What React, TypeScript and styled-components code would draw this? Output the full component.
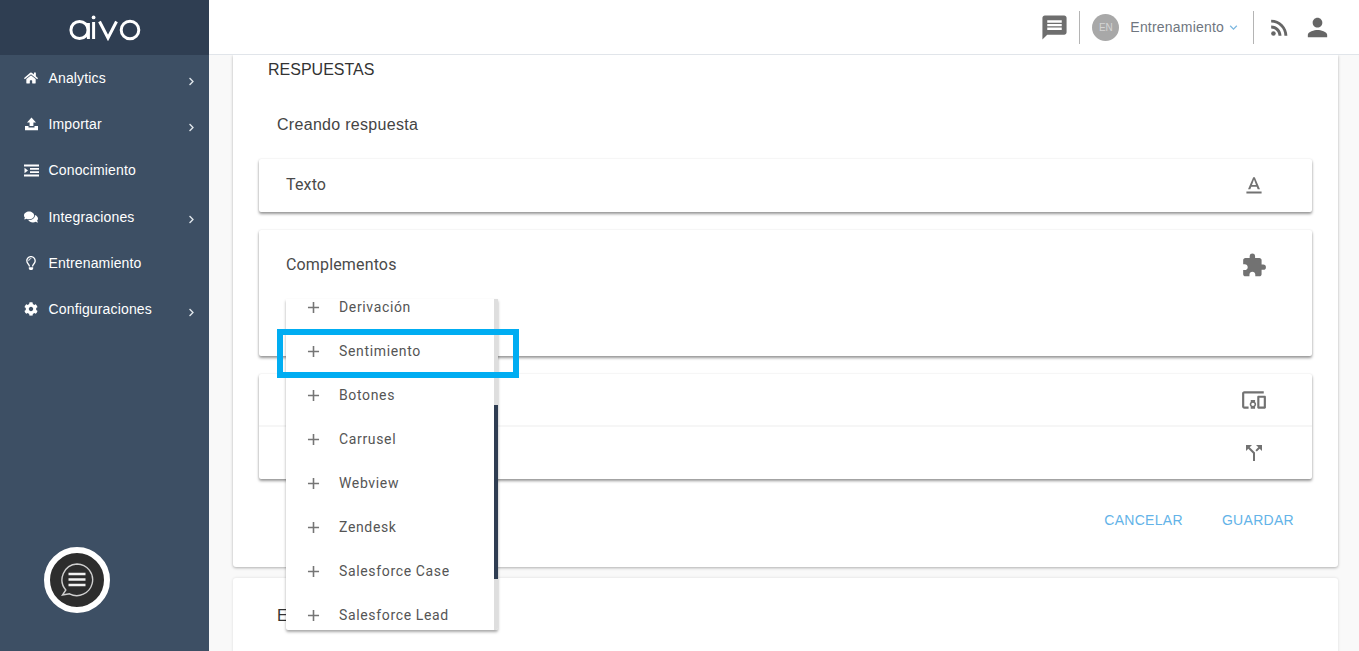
import React from "react";
import styled, { createGlobalStyle } from "styled-components";
import { FaHome, FaComments, FaRegLightbulb, FaCog, FaChevronRight } from "react-icons/fa";
import {
  MdMessage,
  MdRssFeed,
  MdPerson,
  MdKeyboardArrowDown,
  MdTextFormat,
  MdExtension,
  MdCallSplit,
  MdAdd,
  MdOutlineDevicesOther,
} from "react-icons/md";

const GlobalStyle = createGlobalStyle`
  html, body {
    margin: 0;
    height: 100%;
    overflow: hidden;
    background: #f9f9f9;
  }
  #root {
    height: 100%;
  }
`;

const Page = styled.div`
  display: flex;
  height: 651px;
  width: 1359px;
  overflow: hidden;
  position: relative;
  font-family: "Liberation Sans", Arial, sans-serif;
`;

const Sidebar = styled.aside`
  width: 209px;
  flex: none;
  display: flex;
  flex-direction: column;
  background: #3d4f64;
`;

const LogoBar = styled.div`
  height: 55px;
  display: flex;
  align-items: center;
  justify-content: center;
  background: #2f3e52;
`;

const NavRow = styled.div`
  height: 46.2px;
  display: flex;
  align-items: center;
  padding-left: 24px;
  color: #fff;
  font-size: 14px;
  letter-spacing: 0.15px;
  position: relative;
`;

const NavIcon = styled.span`
  width: 24.5px;
  display: flex;
  align-items: center;
  font-size: 14px;
`;

const NavArrow = styled.span`
  margin-left: auto;
  margin-right: 13px;
  margin-top: 6px;
  font-size: 9px;
  display: flex;
  color: #dfe5ea;
`;

const ChatBubble = styled.div`
  margin-top: auto;
  margin-left: 44px;
  margin-bottom: 38px;
  width: 66px;
  height: 66px;
  box-sizing: border-box;
  border: 6px solid #fff;
  border-radius: 50%;
  background: #2d2d2d;
  display: flex;
  align-items: center;
  justify-content: center;
`;

const Main = styled.div`
  flex: 1;
  display: flex;
  flex-direction: column;
  min-width: 0;
`;

const TopBar = styled.header`
  height: 54px;
  flex: none;
  background: #fff;
  border-bottom: 1px solid #e1e5ea;
  display: flex;
  align-items: center;
  justify-content: flex-end;
  color: #666;
  padding-right: 27px;
`;

const TopIcon = styled.span<{ $size: number; $ml: number }>`
  display: flex;
  font-size: ${(p) => p.$size}px;
  margin-left: ${(p) => p.$ml}px;
`;

const Divider = styled.span<{ $ml: number }>`
  width: 1px;
  height: 33px;
  background: #b4b4b4;
  margin-left: ${(p) => p.$ml}px;
`;

const Avatar = styled.span`
  width: 27px;
  height: 27px;
  border-radius: 50%;
  background: #a8a8a8;
  color: #d4d4d4;
  font-size: 10px;
  display: flex;
  align-items: center;
  justify-content: center;
  margin-left: 12px;
`;

const UserName = styled.span`
  font-size: 14px;
  letter-spacing: 0.2px;
  color: #6f7680;
  margin-left: 11px;
`;

const Content = styled.main`
  flex: 1;
  overflow: hidden;
  padding: 0 21px 0 24px;
  display: flex;
  flex-direction: column;
  gap: 11px;
`;

const Card = styled.section`
  flex: none;
  background: #fff;
  border-radius: 0 0 3px 3px;
  box-shadow: 0 1px 3px rgba(0, 0, 0, 0.3);
  height: 512px;
  padding: 0 26px;
  box-sizing: border-box;
  display: flex;
  flex-direction: column;
`;

const SecondCard = styled.section`
  flex: none;
  background: #fff;
  border-radius: 3px 3px 0 0;
  box-shadow: 0 0 3px rgba(0, 0, 0, 0.12);
  height: 120px;
  padding: 29px 0 0 44px;
  font-size: 16px;
  color: #333;
`;

const SectionTitle = styled.h2`
  margin: 6px 0 0 9px;
  height: 18px;
  line-height: 18px;
  font-size: 16px;
  font-weight: 400;
  color: #333;
`;

const SubTitle = styled.h3`
  margin: 37px 0 0 18px;
  height: 18px;
  line-height: 18px;
  font-size: 16px;
  letter-spacing: 0.3px;
  font-weight: 400;
  color: #444;
`;

const Panel = styled.div<{ $height: number; $mt: number }>`
  height: ${(p) => p.$height}px;
  margin-top: ${(p) => p.$mt}px;
  flex: none;
  background: #fff;
  border-radius: 2px;
  box-shadow: 0 2px 3px rgba(0, 0, 0, 0.4), 0 0 2px rgba(0, 0, 0, 0.1);
  display: flex;
  flex-direction: column;
`;

const PanelRow = styled.div<{ $height: number; $line?: boolean }>`
  height: ${(p) => p.$height}px;
  flex: none;
  box-sizing: border-box;
  display: flex;
  align-items: center;
  padding: 0 45px 0 27px;
  font-family: Roboto, sans-serif;
  font-size: 16px;
  letter-spacing: 0.15px;
  color: #4a4a4a;
  border-bottom: ${(p) => (p.$line ? "2px solid #f6f6f6" : "none")};
`;

const PanelLabel = styled.span`
  position: relative;
  top: -1px;
`;

const PanelIcon = styled.span<{ $size: number }>`
  margin-left: auto;
  width: 26px;
  display: flex;
  justify-content: center;
  font-size: ${(p) => p.$size}px;
  color: #727272;
`;

const Actions = styled.div`
  display: flex;
  justify-content: flex-end;
  gap: 39px;
  margin-top: 33px;
  padding-right: 18px;
  font-size: 14px;
  letter-spacing: 0.3px;
  color: #63b3e8;
`;

const Menu = styled.div`
  position: absolute;
  left: 286px;
  top: 299px;
  width: 212px;
  height: 331px;
  overflow: hidden;
  background: #fff;
  border-radius: 0 0 2px 2px;
  box-shadow: 0 2px 3px rgba(0, 0, 0, 0.35);
`;

const MenuList = styled.div`
  margin-top: -14px;
`;

const MenuItem = styled.div`
  height: 44px;
  display: flex;
  align-items: center;
  padding-left: 18px;
  font-family: Roboto, sans-serif;
  font-size: 14px;
  letter-spacing: 0.65px;
  color: #555;
`;

const PlusIcon = styled.span`
  display: flex;
  width: 35px;
  font-size: 19px;
  color: #757575;
`;

const ScrollTrack = styled.div`
  position: absolute;
  right: 0;
  top: 0;
  bottom: 0;
  width: 4px;
  background: #dedede;
`;

const ScrollThumb = styled.div`
  position: absolute;
  left: 0;
  top: 106px;
  width: 100%;
  height: 174px;
  background: #2f3d52;
`;

const Highlight = styled.div`
  position: absolute;
  left: 277px;
  top: 329px;
  width: 242px;
  height: 49px;
  box-sizing: border-box;
  border: 6px solid #00adf2;
`;

function UploadIcon() {
  return (
    <svg width="15" height="14" viewBox="0 0 15 14" fill="#fff">
      <path d="M7.5 0.5 L12 5.5 H9.4 V9 H5.6 V5.5 H3 Z" />
      <path d="M1 9 H4.5 V10.5 H10.5 V9 H14 V13.2 H1 Z" />
    </svg>
  );
}

function IndentIcon() {
  return (
    <svg width="15" height="13" viewBox="0 0 15 13" fill="#fff">
      <path d="M0 0.5 H15 V2.5 H0 Z M6 4 H15 V5.8 H6 Z M6 7.2 H15 V9 H6 Z M0 10.5 H15 V12.5 H0 Z" />
      <path d="M0.5 3.8 L4 6.5 L0.5 9.2 Z" />
    </svg>
  );
}

function Logo() {
  return (
    <svg width="72" height="26" viewBox="0 0 72 26" fill="none" stroke="#fff" strokeWidth="3">
      <circle cx="10.5" cy="15" r="8.6" />
      <path d="M19.4 8 V24" />
      <path d="M24.6 7 V24" />
      <circle cx="24.6" cy="2.4" r="1.9" fill="#fff" stroke="none" />
      <path d="M30.5 6.5 L39 23 L47.5 6.5" />
      <circle cx="61" cy="15" r="8.8" />
    </svg>
  );
}

function BubbleIcon() {
  return (
    <svg width="36" height="36" viewBox="0 0 36 36" fill="none">
      <path
        d="M18 2 A15.8 15.8 0 1 1 10.5 31.8 L3.5 33 L6.8 28 A15.8 15.8 0 0 1 18 2 Z"
        stroke="#cfcfcf"
        strokeWidth="1.4"
      />
      <path d="M9.5 12 H26.5 M9.5 17.5 H26.5 M9.5 23 H26.5" stroke="#f2f2f2" strokeWidth="2.4" />
    </svg>
  );
}

const navItems = [
  { label: "Analytics", icon: <FaHome />, arrow: true },
  { label: "Importar", icon: <UploadIcon />, arrow: true },
  { label: "Conocimiento", icon: <IndentIcon />, arrow: false },
  { label: "Integraciones", icon: <FaComments />, arrow: true },
  { label: "Entrenamiento", icon: <FaRegLightbulb />, arrow: false },
  { label: "Configuraciones", icon: <FaCog />, arrow: true },
];

const menuItems = [
  "Derivación",
  "Sentimiento",
  "Botones",
  "Carrusel",
  "Webview",
  "Zendesk",
  "Salesforce Case",
  "Salesforce Lead",
];

export default function App() {
  return (
    <Page>
      <GlobalStyle />
      <Sidebar>
        <LogoBar>
          <Logo />
        </LogoBar>
        {navItems.map((item) => (
          <NavRow key={item.label}>
            <NavIcon>{item.icon}</NavIcon>
            {item.label}
            {item.arrow && (
              <NavArrow>
                <FaChevronRight />
              </NavArrow>
            )}
          </NavRow>
        ))}
        <ChatBubble>
          <BubbleIcon />
        </ChatBubble>
      </Sidebar>
      <Main>
        <TopBar>
          <TopIcon $size={29} $ml={0}>
            <MdMessage color="#6e6e6e" />
          </TopIcon>
          <Divider $ml={10} />
          <Avatar>EN</Avatar>
          <UserName>Entrenamiento</UserName>
          <TopIcon $size={15} $ml={2}>
            <MdKeyboardArrowDown color="#7db8e0" />
          </TopIcon>
          <Divider $ml={12} />
          <TopIcon $size={25} $ml={13}>
            <MdRssFeed />
          </TopIcon>
          <TopIcon $size={29} $ml={11}>
            <MdPerson />
          </TopIcon>
        </TopBar>
        <Content>
          <Card>
            <SectionTitle>RESPUESTAS</SectionTitle>
            <SubTitle>Creando respuesta</SubTitle>
            <Panel $height={53} $mt={25}>
              <PanelRow $height={53}>
                <PanelLabel>Texto</PanelLabel>
                <PanelIcon $size={26}>
                  <MdTextFormat />
                </PanelIcon>
              </PanelRow>
            </Panel>
            <Panel $height={126} $mt={18}>
              <PanelRow $height={70}>
                <PanelLabel>Complementos</PanelLabel>
                <PanelIcon $size={29}>
                  <MdExtension />
                </PanelIcon>
              </PanelRow>
            </Panel>
            <Panel $height={105} $mt={18}>
              <PanelRow $height={53} $line>
                <PanelIcon $size={26}>
                  <MdOutlineDevicesOther />
                </PanelIcon>
              </PanelRow>
              <PanelRow $height={52}>
                <PanelIcon $size={24}>
                  <MdCallSplit />
                </PanelIcon>
              </PanelRow>
            </Panel>
            <Actions>
              <span>CANCELAR</span>
              <span>GUARDAR</span>
            </Actions>
          </Card>
          <SecondCard>Ejemplos</SecondCard>
        </Content>
      </Main>
      <Menu>
        <MenuList>
          {menuItems.map((label) => (
            <MenuItem key={label}>
              <PlusIcon>
                <MdAdd />
              </PlusIcon>
              {label}
            </MenuItem>
          ))}
        </MenuList>
        <ScrollTrack>
          <ScrollThumb />
        </ScrollTrack>
      </Menu>
      <Highlight />
    </Page>
  );
}
